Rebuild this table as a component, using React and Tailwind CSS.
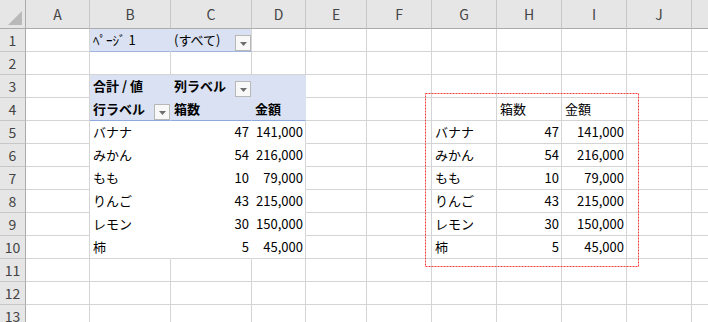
import React from 'react'

const cols = ['A', 'B', 'C', 'D', 'E', 'F', 'G', 'H', 'I', 'J', 'K']

const fruits = [
  ['バナナ', '47', '141,000'],
  ['みかん', '54', '216,000'],
  ['もも', '10', '79,000'],
  ['りんご', '43', '215,000'],
  ['レモン', '30', '150,000'],
  ['柿', '5', '45,000'],
]

const base = 'flex items-center px-[3px] border-r border-b whitespace-nowrap overflow-hidden'
const grid = 'bg-white border-[#d4d4d4]'
const blue = 'bg-[#d9e1f2] border-[#d9e1f2]'

function Dropdown() {
  return (
    <span className="ml-auto self-end mr-[-3px] w-[16px] h-[16px] border border-[#b8b8b8] bg-[#f8f8f8] flex items-center justify-center">
      <svg width="7" height="4" viewBox="0 0 7 4" className="mt-[2px]">
        <path d="M0 0h7L3.5 4z" fill="#6e6e6e" />
      </svg>
    </span>
  )
}

// build cell descriptors for each row: { text, cls, right, bold, dd }
function buildRow(r) {
  const cells = cols.map(() => ({ cls: grid }))
  if (r === 1) {
    cells[1] = { text: 'ﾍﾟｰｼﾞ 1', cls: 'bg-[#d9e1f2] border-r-[#d9e1f2] border-b-[#9fb4de]' }
    cells[2] = { text: '(すべて)', cls: 'bg-[#d9e1f2] border-r-[#d4d4d4] border-b-[#9fb4de]', dd: true }
  }
  if (r === 3) {
    cells[1] = { text: '合計 / 値', cls: blue, bold: true }
    cells[2] = { text: '列ラベル', cls: blue, bold: true, dd: true }
    cells[3] = { cls: blue }
  }
  if (r === 4) {
    const c = 'bg-[#d9e1f2] border-r-[#d9e1f2] border-b-[#8ea9db]'
    cells[1] = { text: '行ラベル', cls: c, bold: true, dd: true }
    cells[2] = { text: '箱数', cls: c, bold: true }
    cells[3] = { text: '金額', cls: c, bold: true }
    cells[7] = { text: '箱数', cls: grid }
    cells[8] = { text: '金額', cls: grid }
  }
  if (r >= 5 && r <= 10) {
    const f = fruits[r - 5]
    const bb = r === 10 ? 'border-b-[#d4d4d4]' : 'border-b-white'
    cells[1] = { text: f[0], cls: `bg-white border-r-white ${bb}` }
    cells[2] = { text: f[1], cls: `bg-white border-r-white ${bb}`, right: true }
    cells[3] = { text: f[2], cls: `bg-white border-r-[#d4d4d4] ${bb}`, right: true }
    cells[6] = { text: f[0], cls: grid }
    cells[7] = { text: f[1], cls: grid, right: true }
    cells[8] = { text: f[2], cls: grid, right: true }
  }
  return cells
}

export default function App() {
  const rows = Array.from({ length: 13 }, (_, i) => i + 1)
  return (
    <div className="relative w-[708px] h-[322px] overflow-hidden bg-white text-black text-[13px] font-['Noto_Sans_CJK_JP','Noto_Sans',sans-serif]">
      <div className="grid grid-cols-[26px_64px_81px_81px_54px_61px_65px_65px_65px_65px_65px_65px] grid-rows-[29px_repeat(13,23px)]">
        <div className="bg-[#e6e6e6] border-r border-b border-r-[#ababab] border-b-[#ababab] flex items-end justify-end pr-[3px] pb-[3px]">
          <svg width="14" height="14" viewBox="0 0 14 14">
            <path d="M14 0V14H0z" fill="#b9b9b9" />
          </svg>
        </div>
        {cols.map(c => (
          <div key={c} className="bg-[#e6e6e6] border-r border-b border-r-[#c6c6c6] border-b-[#ababab] flex items-center justify-center text-[#444] text-[14px]">
            {c}
          </div>
        ))}
        {rows.map(r => (
          <React.Fragment key={r}>
            <div className="bg-[#e6e6e6] border-r border-b border-r-[#ababab] border-b-[#c6c6c6] flex items-center justify-center text-[#444] text-[14px]">
              {r}
            </div>
            {buildRow(r).map((cell, i) => (
              <div
                key={i}
                className={`${base} ${cell.cls} ${cell.right ? 'justify-end pr-[2px]' : ''} ${cell.bold ? 'font-bold' : ''}`}
              >
                {cell.text}
                {cell.dd && <Dropdown />}
              </div>
            ))}
          </React.Fragment>
        ))}
      </div>
      {/* copy marquee */}
      <svg className="absolute left-[425px] top-[93px]" width="214" height="174">
        <rect x="0.5" y="0.5" width="213" height="173" fill="none" stroke="#f23a3a" strokeWidth="1" strokeDasharray="2 1" />
      </svg>
    </div>
  )
}
